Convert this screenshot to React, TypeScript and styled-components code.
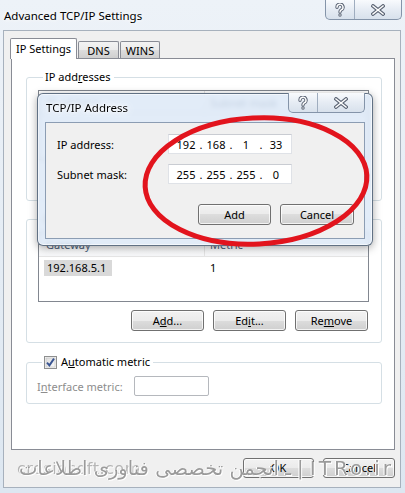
import React from 'react';
import styled, { createGlobalStyle } from 'styled-components';

const Global = createGlobalStyle`
  html, body { margin: 0; padding: 0; }
  body {
    width: 405px; height: 493px; overflow: hidden;
    background: #d8e3ee;
    font-family: "Noto Sans", "DejaVu Sans", sans-serif;
    font-size: 11px; color: #000;
  }
  * { box-sizing: border-box; }
`;

const Window = styled.div`
  position: relative;
  width: 405px; height: 493px;
  display: flex; flex-direction: column;
  background: linear-gradient(#edf2f8, #dde7f1);
  overflow: hidden;
`;

const TitleBar = styled.div`
  height: 30px; flex-shrink: 0;
  display: flex; align-items: flex-start;
`;

const TitleText = styled.div`
  font-size: 11.5px; line-height: 16px;
  padding: 8px 0 0 4px;
  text-shadow: 0 0 6px #fff, 0 0 4px #fff;
`;

const Caption = styled.div<{ $mr?: number }>`
  margin-left: auto;
  margin-right: ${p => p.$mr || 0}px;
  display: flex; height: 20px; flex-shrink: 0;
  border: 1px solid #8494a9; border-top: none;
  border-radius: 0 0 5px 5px;
  background: linear-gradient(#f8fafd, #e6ecf4 50%, #d8e1ec);
  overflow: hidden;
`;

const CapBtn = styled.div<{ $w: number }>`
  width: ${p => p.$w}px;
  display: flex; align-items: center; justify-content: center;
  & + & { border-left: 1px solid #9fadbf; }
`;

const Client = styled.div`
  flex: 1;
  margin: 0 4px 5px 3px;
  border: 1px solid #a7b1bd;
  background: #f0f0f0;
  display: flex; flex-direction: column;
  padding: 7px 5px 0 7px;
`;

const TabStrip = styled.div`
  height: 20px; display: flex; align-items: flex-end;
  position: relative; z-index: 1;
`;

const Tab = styled.div<{ $w: number; $active?: boolean }>`
  width: ${p => p.$w}px;
  height: ${p => (p.$active ? 21 : 17)}px;
  margin-bottom: ${p => (p.$active ? -1 : 0)}px;
  margin-left: ${p => (p.$active ? -1 : 1)}px;
  border: 1px solid #898c95; border-bottom: none;
  border-radius: 2px 2px 0 0;
  background: ${p => (p.$active ? '#fff' : 'linear-gradient(#f3f3f3, #ebebeb 50%, #dddddd 50%, #cfcfcf)')};
  display: flex; align-items: center; justify-content: center;
  padding-top: ${p => (p.$active ? 0 : 2)}px;
  line-height: 14px;
`;

const Page = styled.div`
  height: 392px;
  border: 1px solid #898c95;
  background: #fff;
  padding: 10px 12px 0 14px;
  display: flex; flex-direction: column;
`;

const Group = styled.fieldset<{ $mt?: number }>`
  margin: ${p => p.$mt || 0}px 0 0 0;
  min-width: 0;
  border: 1px solid #d5dfe5;
  border-radius: 3px;
  padding: 5px 12px 11px 11px;
`;

const MetricGroup = styled(Group)`
  padding: 6px 12px 7px 10px;
`;

const Legend = styled.legend`
  padding: 0 3px 0 2px;
  margin-left: 5px;
  line-height: 16px;
  display: flex; align-items: center; gap: 4px;
`;

const U = styled.span`
  text-decoration: underline;
`;

const ListView = styled.div`
  height: 70px;
  border: 1px solid #828790;
  background: #fff;
`;

const ListHeader = styled.div`
  height: 24px;
  display: flex;
  border-bottom: 1px solid #e5e5e5;
  background: linear-gradient(#fff, #fff 50%, #f7f8fa);
  color: #4c607a;
`;

const HeaderCol = styled.div<{ $w?: number; $pl: number }>`
  ${p => (p.$w ? `width: ${p.$w}px;` : 'flex: 1;')}
  padding-left: ${p => p.$pl}px;
  display: flex; align-items: center;
  & + & { border-left: 1px solid #e5e5e5; }
`;

const Row = styled.div`
  display: flex; height: 16px; margin-top: 3px;
  line-height: 16px;
`;

const Cell = styled.div<{ $w?: number; $pl: number }>`
  ${p => (p.$w ? `width: ${p.$w}px;` : 'flex: 1;')}
  padding-left: ${p => p.$pl}px;
`;

const Selected = styled.span`
  display: inline-block;
  background: #d9d9d9;
  padding: 0 6px 0 3px;
  height: 16px;
`;

const Buttons = styled.div<{ $mt: number; $pr?: number }>`
  display: flex; justify-content: flex-end; gap: 9px;
  margin-top: ${p => p.$mt}px;
  padding-right: ${p => p.$pr || 0}px;
`;

const Button = styled.button<{ $w: number; $h?: number }>`
  width: ${p => p.$w}px; height: ${p => p.$h || 21}px;
  font: inherit; color: #000;
  padding: 0;
  border: 1px solid #707070; border-radius: 3px;
  background: linear-gradient(#f2f2f2, #ebebeb 50%, #dddddd 50%, #cfcfcf);
  box-shadow: inset 0 0 0 1px rgba(255, 255, 255, 0.75);
  line-height: 14px;
`;

const CheckRow = styled.div`
  display: flex; align-items: center;
`;

const Disabled = styled.span`
  color: #8d8d8d;
  width: 97px;
`;

const TextBox = styled.div<{ $w: number }>`
  width: ${p => p.$w}px; height: 20px;
  border: 1px solid #b5b8bd;
  border-radius: 2px;
  background: #fff;
`;

const BottomBar = styled.div`
  display: flex; justify-content: flex-end; gap: 9px;
  padding-top: 8px;
`;

/* ---- Overlaid dialog ---- */

const Dialog = styled.div`
  position: absolute;
  left: 37px; top: 93px;
  width: 336px; height: 153px;
  border: 1px solid rgba(55, 72, 94, 0.75);
  border-radius: 6px;
  background: rgba(220, 232, 246, 0.82);
  backdrop-filter: blur(2.5px);
  box-shadow: 0 2px 9px rgba(0, 0, 0, 0.35), inset 0 0 0 1px rgba(255, 255, 255, 0.6);
  padding: 0 7px 6px 7px;
  display: flex; flex-direction: column;
  z-index: 5;
`;

const DlgTitleRow = styled.div`
  height: 28px; display: flex; align-items: flex-start;
`;

const DlgTitle = styled.div`
  font-size: 11.5px; line-height: 16px;
  padding: 6px 0 0 1px;
  text-shadow: 0 0 6px #fff, 0 0 8px #fff, 0 0 3px #fff;
`;

const DlgCaption = styled(Caption)`
  margin-top: -1px;
`;

const DlgBody = styled.div`
  flex: 1;
  border: 1px solid #8c9db3;
  background: #f0f0f0;
  padding: 11px 10px 0 11px;
  display: flex; flex-direction: column;
`;

const FieldRow = styled.div<{ $mt?: number }>`
  display: flex; align-items: center;
  margin-top: ${p => p.$mt || 0}px;
`;

const FieldLabel = styled.div`
  width: 111px;
`;

const IpBox = styled.div`
  width: 124px; height: 20px;
  border: 1px solid #dfe2e7;
  border-top-color: #c9ccd2;
  background: #fff;
  display: flex; align-items: center;
  padding-left: 5px;
`;

const Octet = styled.span`
  width: 24px; text-align: center;
`;

const Dot = styled.span`
  width: 6px; text-align: center;
`;

const Ellipse = styled.svg`
  position: absolute; left: 0; top: 0;
  pointer-events: none;
  z-index: 10;
`;

const Watermark = styled.div`
  position: absolute; right: 11px; top: 456px;
  direction: rtl; white-space: nowrap;
  font-family: "DejaVu Sans", sans-serif;
  font-size: 19.5px; line-height: 24px;
  color: rgba(130, 130, 130, 0.8);
  text-shadow: 1px 1px 0 #fff, -1px 0 0 #fff;
  z-index: 11;
`;

const WmLatin = styled.span`
  letter-spacing: 3px;
  font-size: 20px;
`;

const Watermark2 = styled.div`
  position: absolute; left: 17px; top: 458px;
  font-family: "DejaVu Sans", sans-serif;
  font-size: 16px; line-height: 22px;
  letter-spacing: 0.5px;
  color: rgba(120, 120, 120, 0.5);
  text-shadow: 1px 1px 0 rgba(255,255,255,.8);
  z-index: 11;
`;

const HelpIcon = () => (
  <svg width="10" height="14" viewBox="0 0 10 14">
    <path d="M2 4.2 A3 3 0 1 1 6.2 6.9 C5.2 7.5 5 8 5 9" fill="none" stroke="#5d6676" strokeWidth="3.4" strokeLinecap="round" />
    <circle cx="5" cy="12" r="1.7" fill="#5d6676" />
    <path d="M2 4.2 A3 3 0 1 1 6.2 6.9 C5.2 7.5 5 8 5 9" fill="none" stroke="#fff" strokeWidth="1.4" strokeLinecap="round" />
    <circle cx="5" cy="12" r="0.7" fill="#fff" />
  </svg>
);

const CloseIcon = () => (
  <svg width="14" height="12" viewBox="0 0 14 12">
    <g strokeLinecap="square">
      <line x1="2" y1="2" x2="12" y2="10" stroke="#5d6676" strokeWidth="3.6" />
      <line x1="12" y1="2" x2="2" y2="10" stroke="#5d6676" strokeWidth="3.6" />
      <line x1="2" y1="2" x2="12" y2="10" stroke="#fff" strokeWidth="1.5" />
      <line x1="12" y1="2" x2="2" y2="10" stroke="#fff" strokeWidth="1.5" />
    </g>
  </svg>
);

const CheckIcon = () => (
  <svg width="13" height="13" viewBox="0 0 13 13">
    <defs>
      <linearGradient id="cbg" x1="0" y1="0" x2="1" y2="1">
        <stop offset="0" stopColor="#dcdcdc" />
        <stop offset="1" stopColor="#fafafa" />
      </linearGradient>
    </defs>
    <rect x="0.5" y="0.5" width="12" height="12" fill="#f4f4f4" stroke="#8e8f8f" />
    <rect x="2" y="2" width="9" height="9" fill="url(#cbg)" stroke="#c0c0c0" strokeWidth="0.6" />
    <path d="M3 6.6 L5.4 9.4 L10 2.6" fill="none" stroke="#3a5592" strokeWidth="1.9" />
  </svg>
);

const IpField = ({ parts }: { parts: string[] }) => (
  <IpBox>
    {parts.map((p, i) => (
      <React.Fragment key={i}>
        {i > 0 && <Dot>.</Dot>}
        <Octet>{p}</Octet>
      </React.Fragment>
    ))}
  </IpBox>
);

const ListButtons = () => (
  <Buttons $mt={8} $pr={1}>
    <Button $w={73}>A<U>d</U>d...</Button>
    <Button $w={73}>Ed<U>i</U>t...</Button>
    <Button $w={73}>Re<U>m</U>ove</Button>
  </Buttons>
);

export default function App() {
  return (
    <>
      <Global />
      <Window>
        <TitleBar>
          <TitleText>Advanced TCP/IP Settings</TitleText>
          <Caption $mr={3}>
            <CapBtn $w={28}><HelpIcon /></CapBtn>
            <CapBtn $w={47}><CloseIcon /></CapBtn>
          </Caption>
        </TitleBar>
        <Client>
          <TabStrip>
            <Tab $w={67} $active>IP Settings</Tab>
            <Tab $w={41}>DNS</Tab>
            <Tab $w={40}>WINS</Tab>
          </TabStrip>
          <Page>
            <Group>
              <Legend>
                <span>IP add<U>r</U>esses</span>
              </Legend>
              <ListView>
                <ListHeader>
                  <HeaderCol $w={165} $pl={7}>IP address</HeaderCol>
                  <HeaderCol $pl={5}>Subnet mask</HeaderCol>
                </ListHeader>
              </ListView>
              <ListButtons />
            </Group>
            <Group $mt={10}>
              <Legend>
                <span>De<U>f</U>ault gateways:</span>
              </Legend>
              <ListView>
                <ListHeader>
                  <HeaderCol $w={165} $pl={7}>Gateway</HeaderCol>
                  <HeaderCol $pl={5}>Metric</HeaderCol>
                </ListHeader>
                <Row>
                  <Cell $w={165} $pl={5}><Selected>192.168.5.1</Selected></Cell>
                  <Cell $pl={6}>1</Cell>
                </Row>
              </ListView>
              <ListButtons />
            </Group>
            <MetricGroup $mt={11}>
              <Legend>
                <CheckIcon />
                <span>A<U>u</U>tomatic metric</span>
              </Legend>
              <CheckRow>
                <Disabled>I<U>n</U>terface metric:</Disabled>
                <TextBox $w={75} />
              </CheckRow>
            </MetricGroup>
          </Page>
          <BottomBar>
            <Button $w={71} $h={20}>OK</Button>
            <Button $w={72} $h={20}>Cancel</Button>
          </BottomBar>
        </Client>

        <Dialog>
          <DlgTitleRow>
            <DlgTitle>TCP/IP Address</DlgTitle>
            <DlgCaption>
              <CapBtn $w={28}><HelpIcon /></CapBtn>
              <CapBtn $w={47}><CloseIcon /></CapBtn>
            </DlgCaption>
          </DlgTitleRow>
          <DlgBody>
            <FieldRow>
              <FieldLabel>IP address:</FieldLabel>
              <IpField parts={['192', '168', '1', '33']} />
            </FieldRow>
            <FieldRow $mt={10}>
              <FieldLabel>Subnet mask:</FieldLabel>
              <IpField parts={['255', '255', '255', '0']} />
            </FieldRow>
            <Buttons $mt={20}>
              <Button $w={73}>Add</Button>
              <Button $w={74}>Cancel</Button>
            </Buttons>
          </DlgBody>
        </Dialog>

        <Ellipse width="405" height="493" viewBox="0 0 405 493">
          <ellipse cx="256" cy="181" rx="111" ry="63" transform="rotate(-3 256 181)" fill="none" stroke="#e2141d" strokeWidth="5" />
        </Ellipse>

        <Watermark2>crosinsoft.com</Watermark2>
        <Watermark>
          <WmLatin>ITRo.ir</WmLatin> | ـ انجمن تخصصی فناوری اطلاعات
        </Watermark>
      </Window>
    </>
  );
}
